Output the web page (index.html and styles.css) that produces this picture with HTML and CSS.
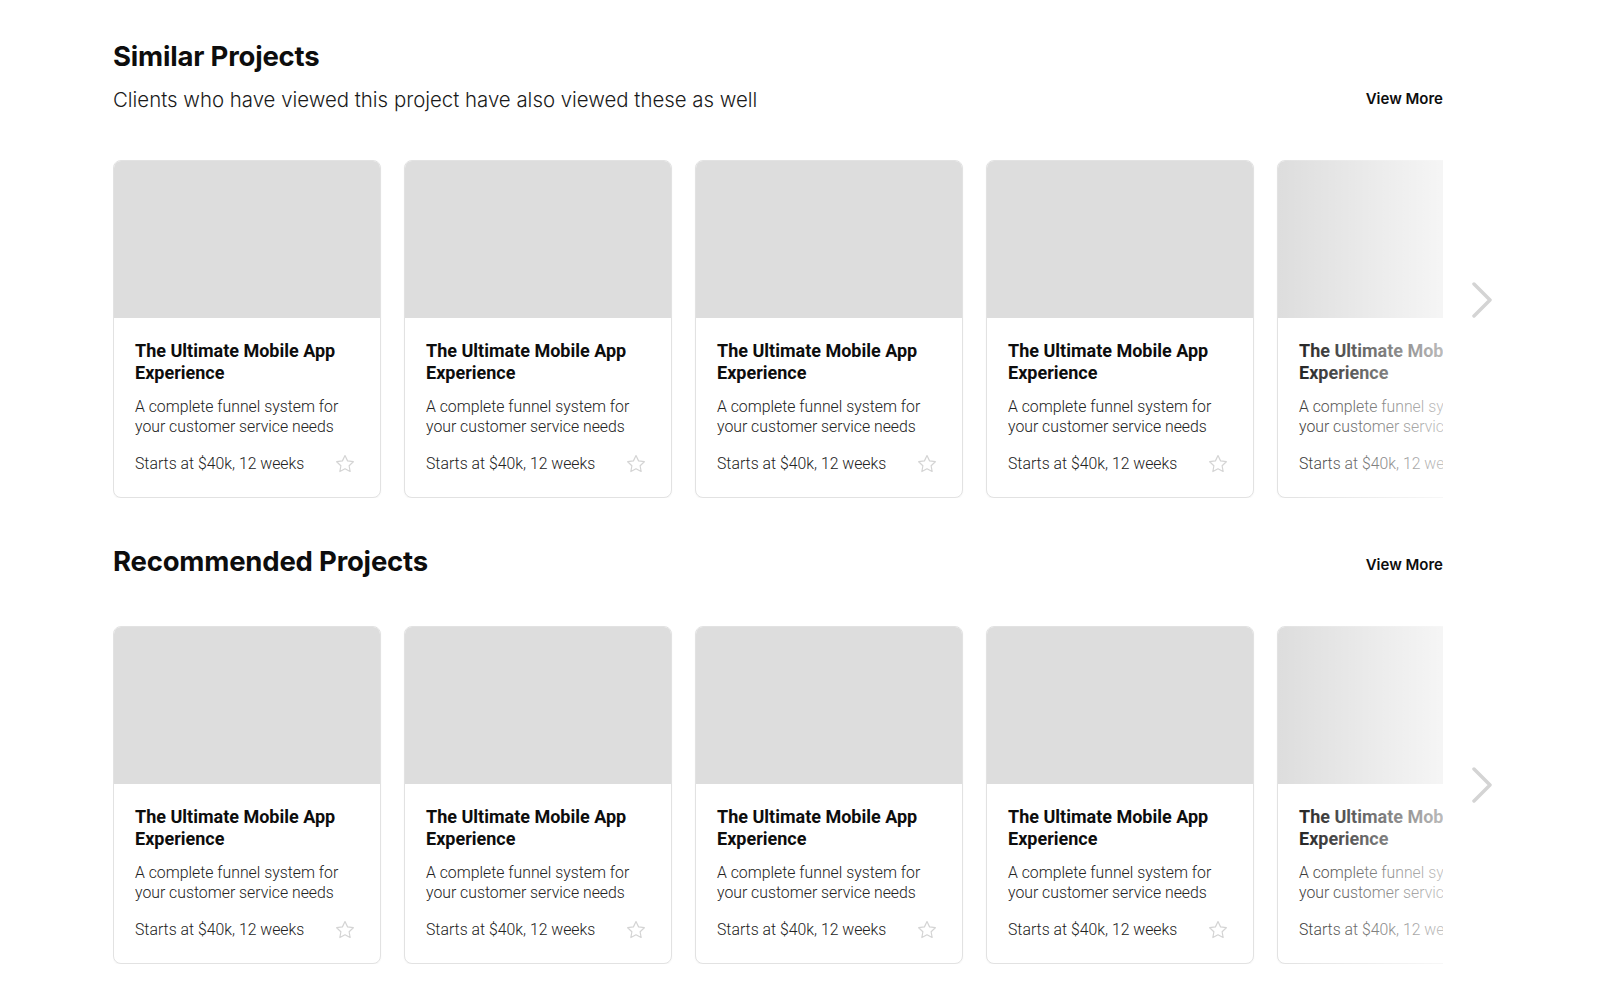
FILE: index.html
```html
<!DOCTYPE html>
<html lang="en">
<head>
  <meta charset="UTF-8" />
  <meta name="viewport" content="width=device-width, initial-scale=1.0"/>
  <title>Projects</title>
  <link rel="stylesheet" href="styles.css">
</head>
<body>
  <main class="page">

    <!-- Similar projects -->
    <section class="projects projects-similar">
      <div class="projects-head">
        <div class="projects-titles">
          <h2>Similar Projects</h2>
          <p class="projects-sub">Clients who have viewed this project have also viewed these as well</p>
        </div>
        <a href="#" class="view-more">View More</a>
      </div>

      <div class="carousel">
        <div class="track">
          <div class="card">
            <div class="card-img"></div>
            <div class="card-body">
              <h3>The Ultimate Mobile App Experience</h3>
              <p class="card-desc">A complete funnel system for your customer service needs</p>
              <div class="card-foot">
                <span>Starts at $40k, 12 weeks</span>
                <svg class="star" viewBox="0 0 24 24"><path d="M12 2.8l2.8 5.8 6.3.9-4.6 4.4 1.1 6.3L12 17.2l-5.6 3 1.1-6.3-4.6-4.4 6.3-.9z"/></svg>
              </div>
            </div>
          </div>
          <div class="card">
            <div class="card-img"></div>
            <div class="card-body">
              <h3>The Ultimate Mobile App Experience</h3>
              <p class="card-desc">A complete funnel system for your customer service needs</p>
              <div class="card-foot">
                <span>Starts at $40k, 12 weeks</span>
                <svg class="star" viewBox="0 0 24 24"><path d="M12 2.8l2.8 5.8 6.3.9-4.6 4.4 1.1 6.3L12 17.2l-5.6 3 1.1-6.3-4.6-4.4 6.3-.9z"/></svg>
              </div>
            </div>
          </div>
          <div class="card">
            <div class="card-img"></div>
            <div class="card-body">
              <h3>The Ultimate Mobile App Experience</h3>
              <p class="card-desc">A complete funnel system for your customer service needs</p>
              <div class="card-foot">
                <span>Starts at $40k, 12 weeks</span>
                <svg class="star" viewBox="0 0 24 24"><path d="M12 2.8l2.8 5.8 6.3.9-4.6 4.4 1.1 6.3L12 17.2l-5.6 3 1.1-6.3-4.6-4.4 6.3-.9z"/></svg>
              </div>
            </div>
          </div>
          <div class="card">
            <div class="card-img"></div>
            <div class="card-body">
              <h3>The Ultimate Mobile App Experience</h3>
              <p class="card-desc">A complete funnel system for your customer service needs</p>
              <div class="card-foot">
                <span>Starts at $40k, 12 weeks</span>
                <svg class="star" viewBox="0 0 24 24"><path d="M12 2.8l2.8 5.8 6.3.9-4.6 4.4 1.1 6.3L12 17.2l-5.6 3 1.1-6.3-4.6-4.4 6.3-.9z"/></svg>
              </div>
            </div>
          </div>
          <div class="card">
            <div class="card-img"></div>
            <div class="card-body">
              <h3>The Ultimate Mobile App Experience</h3>
              <p class="card-desc">A complete funnel system for your customer service needs</p>
              <div class="card-foot">
                <span>Starts at $40k, 12 weeks</span>
                <svg class="star" viewBox="0 0 24 24"><path d="M12 2.8l2.8 5.8 6.3.9-4.6 4.4 1.1 6.3L12 17.2l-5.6 3 1.1-6.3-4.6-4.4 6.3-.9z"/></svg>
              </div>
            </div>
          </div>
        </div>
        <div class="fade"></div>
        <button class="next next-similar" aria-label="Next">
          <svg viewBox="0 0 20 36"><path d="M2 2l16 16L2 34"/></svg>
        </button>
      </div>
    </section>

    <!-- Recommended projects -->
    <section class="projects projects-recommended">
      <div class="projects-head">
        <div class="projects-titles">
          <h2>Recommended Projects</h2>
        </div>
        <a href="#" class="view-more">View More</a>
      </div>

      <div class="carousel">
        <div class="track">
          <div class="card">
            <div class="card-img"></div>
            <div class="card-body">
              <h3>The Ultimate Mobile App Experience</h3>
              <p class="card-desc">A complete funnel system for your customer service needs</p>
              <div class="card-foot">
                <span>Starts at $40k, 12 weeks</span>
                <svg class="star" viewBox="0 0 24 24"><path d="M12 2.8l2.8 5.8 6.3.9-4.6 4.4 1.1 6.3L12 17.2l-5.6 3 1.1-6.3-4.6-4.4 6.3-.9z"/></svg>
              </div>
            </div>
          </div>
          <div class="card">
            <div class="card-img"></div>
            <div class="card-body">
              <h3>The Ultimate Mobile App Experience</h3>
              <p class="card-desc">A complete funnel system for your customer service needs</p>
              <div class="card-foot">
                <span>Starts at $40k, 12 weeks</span>
                <svg class="star" viewBox="0 0 24 24"><path d="M12 2.8l2.8 5.8 6.3.9-4.6 4.4 1.1 6.3L12 17.2l-5.6 3 1.1-6.3-4.6-4.4 6.3-.9z"/></svg>
              </div>
            </div>
          </div>
          <div class="card">
            <div class="card-img"></div>
            <div class="card-body">
              <h3>The Ultimate Mobile App Experience</h3>
              <p class="card-desc">A complete funnel system for your customer service needs</p>
              <div class="card-foot">
                <span>Starts at $40k, 12 weeks</span>
                <svg class="star" viewBox="0 0 24 24"><path d="M12 2.8l2.8 5.8 6.3.9-4.6 4.4 1.1 6.3L12 17.2l-5.6 3 1.1-6.3-4.6-4.4 6.3-.9z"/></svg>
              </div>
            </div>
          </div>
          <div class="card">
            <div class="card-img"></div>
            <div class="card-body">
              <h3>The Ultimate Mobile App Experience</h3>
              <p class="card-desc">A complete funnel system for your customer service needs</p>
              <div class="card-foot">
                <span>Starts at $40k, 12 weeks</span>
                <svg class="star" viewBox="0 0 24 24"><path d="M12 2.8l2.8 5.8 6.3.9-4.6 4.4 1.1 6.3L12 17.2l-5.6 3 1.1-6.3-4.6-4.4 6.3-.9z"/></svg>
              </div>
            </div>
          </div>
          <div class="card">
            <div class="card-img"></div>
            <div class="card-body">
              <h3>The Ultimate Mobile App Experience</h3>
              <p class="card-desc">A complete funnel system for your customer service needs</p>
              <div class="card-foot">
                <span>Starts at $40k, 12 weeks</span>
                <svg class="star" viewBox="0 0 24 24"><path d="M12 2.8l2.8 5.8 6.3.9-4.6 4.4 1.1 6.3L12 17.2l-5.6 3 1.1-6.3-4.6-4.4 6.3-.9z"/></svg>
              </div>
            </div>
          </div>
        </div>
        <div class="fade"></div>
        <button class="next next-recommended" aria-label="Next">
          <svg viewBox="0 0 20 36"><path d="M2 2l16 16L2 34"/></svg>
        </button>
      </div>
    </section>

  </main>
</body>
</html>
```

FILE: styles.css
```css
:root {
  --text: #111111;
  --placeholder: #dddddd;
  --border: #e2e2e2;
  --icon: #d4d4d4;
  --card-w: 268px;
  --gap: 23px;
}

* {
  box-sizing: border-box;
  margin: 0;
  padding: 0;
}

body {
  font-family: 'Inter', 'Roboto', sans-serif;
  background: #ffffff;
  color: var(--text);
}

.page {
  width: 1330px;
  margin-left: 113px;
  padding-top: 39px;
}

.projects-head {
  display: flex;
  justify-content: space-between;
  align-items: flex-end;
}

.projects h2 {
  font-size: 27.5px;
  line-height: 34px;
  font-weight: 700;
  letter-spacing: -0.2px;
  color: #0d0d0d;
}

.projects-sub {
  margin-top: 13px;
  font-size: 20.4px;
  line-height: 28px;
  font-weight: 300;
  color: #1a1a1a;
}

.view-more {
  font-size: 15px;
  font-weight: 600;
  color: #0d0d0d;
  text-decoration: none;
  line-height: 20px;
  margin-bottom: 5px;
}

.projects-recommended {
  margin-top: 46px;
}

.projects-recommended .view-more {
  margin-bottom: 3px;
}

.carousel {
  position: relative;
  margin-top: 46px;
}

.projects-recommended .carousel {
  margin-top: 48px;
}

.track {
  display: flex;
  gap: var(--gap);
  overflow: hidden;
}

.card {
  flex: 0 0 var(--card-w);
  border: 1px solid var(--border);
  border-radius: 8px;
  overflow: hidden;
  background: #fff;
  box-shadow: 0 1px 2px rgba(0, 0, 0, 0.04);
}

.card-img {
  height: 157px;
  background: var(--placeholder);
}

.card-body {
  padding: 22px 24px 22px 21px;
  font-family: 'Roboto', sans-serif;
}

.card-body h3 {
  font-size: 18px;
  line-height: 22px;
  font-weight: 700;
  color: #0d0d0d;
}

.card-desc {
  margin-top: 13px;
  font-size: 15.8px;
  line-height: 20px;
  font-weight: 300;
  color: #222;
}

.card-foot {
  margin-top: 16px;
  display: flex;
  justify-content: space-between;
  align-items: center;
  font-size: 15.8px;
  line-height: 20px;
  font-weight: 300;
  color: #222;
}

.star {
  width: 22px;
  height: 22px;
  fill: none;
  stroke: var(--icon);
  stroke-width: 1.3;
  stroke-linejoin: round;
}

.fade {
  position: absolute;
  top: 0;
  right: 0;
  width: 166px;
  height: 100%;
  background: linear-gradient(to right, rgba(255, 255, 255, 0) 0%, rgba(255, 255, 255, 0.72) 100%);
  pointer-events: none;
}

.next {
  position: absolute;
  left: 1359px;
  width: 20px;
  height: 36px;
  border: none;
  background: none;
  cursor: pointer;
}

.next-similar {
  top: 122px;
}

.next-recommended {
  top: 141px;
}

.next svg {
  width: 20px;
  height: 36px;
  fill: none;
  stroke: var(--icon);
  stroke-width: 3.5;
  stroke-linecap: round;
  stroke-linejoin: round;
}
```
